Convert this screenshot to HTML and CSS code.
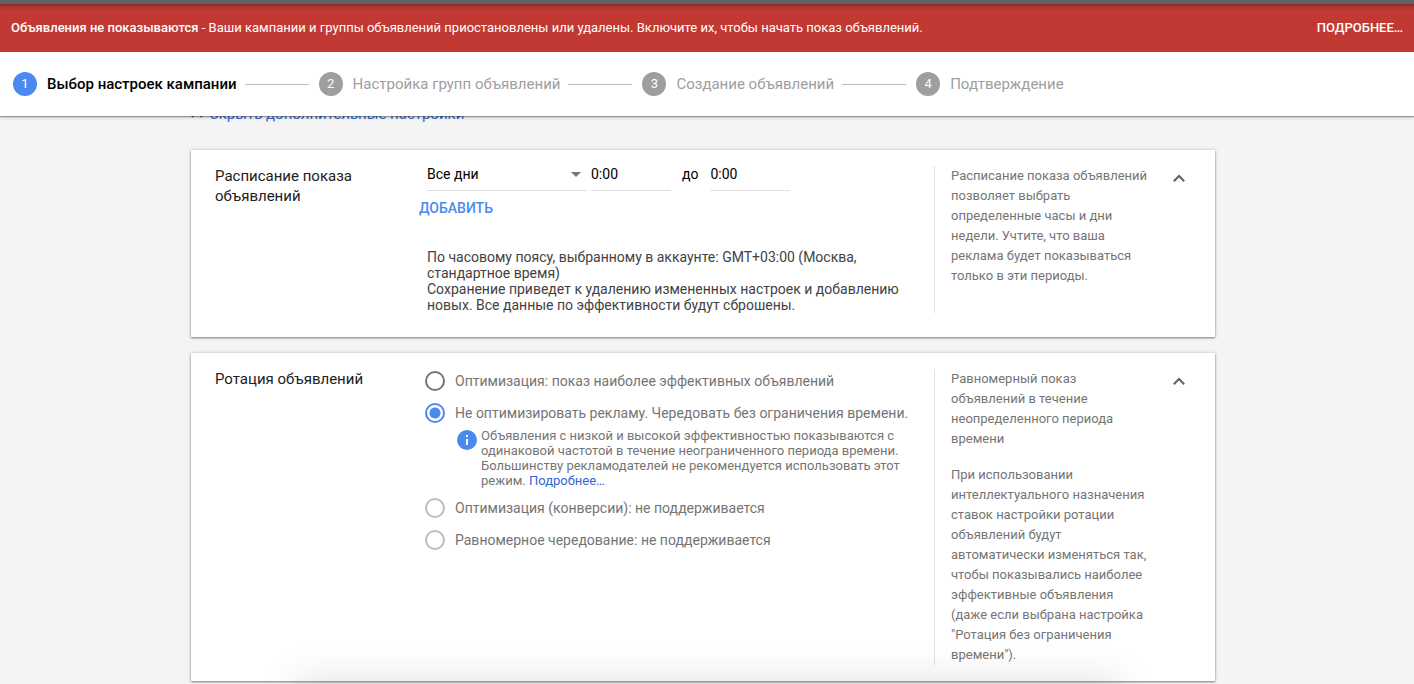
FILE: index.html
```html
<!DOCTYPE html>
<html lang="ru">
<head>
<meta charset="utf-8">
<meta name="viewport" content="width=device-width, initial-scale=1">
<title>Выбор настроек кампании</title>
<link rel="stylesheet" href="styles.css">
</head>
<body>
<header class="top">
  <div class="alert" role="alert">
    <p class="alert-text"><strong>Объявления не показываются</strong> - Ваши кампании и группы объявлений приостановлены или удалены. Включите их, чтобы начать показ объявлений.</p>
    <button type="button" class="alert-more">ПОДРОБНЕЕ…</button>
  </div>
  <ol class="steps">
    <li class="step step-current" aria-current="step"><span class="step-num">1</span><span>Выбор настроек кампании</span></li>
    <li class="step"><span class="step-num">2</span><span>Настройка групп объявлений</span></li>
    <li class="step"><span class="step-num">3</span><span>Создание объявлений</span></li>
    <li class="step"><span class="step-num">4</span><span>Подтверждение</span></li>
  </ol>
</header>

<main class="content">
  <a href="#settings" class="toggle">
    <svg class="toggle-icon" width="12" height="12" viewBox="0 0 12 12" aria-hidden="true"><path d="M1 9l5-5 5 5" fill="none" stroke="#616161" stroke-width="2"/></svg>
    <span>Скрыть дополнительные настройки</span>
  </a>

  <section class="card card-schedule" id="settings">
    <h2 class="card-title">Расписание показа объявлений</h2>
    <div class="card-body">
      <div class="times">
        <span class="select-box">
          <select class="field" aria-label="Дни"><option>Все дни</option></select>
          <svg class="caret" width="10" height="5" viewBox="0 0 10 5" aria-hidden="true"><path d="M0 0h10L5 5z" fill="#757575"/></svg>
        </span>
        <input class="field time" type="text" value="0:00" aria-label="Начало">
        <label class="until" for="end">до</label>
        <input class="field time" type="text" value="0:00" id="end">
      </div>
      <button type="button" class="add">ДОБАВИТЬ</button>
      <p class="note">По часовому поясу, выбранному в аккаунте: GMT+03:00 (Москва, стандартное время)<br>Сохранение приведет к удалению измененных настроек и добавлению новых. Все данные по эффективности будут сброшены.</p>
    </div>
    <aside class="help">
      <p>Расписание показа объявлений позволяет выбрать определенные часы и дни недели. Учтите, что ваша реклама будет показываться только в эти периоды.</p>
    </aside>
    <button type="button" class="collapse" aria-label="Свернуть"><svg width="12" height="8" viewBox="0 0 12 8" aria-hidden="true"><path d="M.8 7.2L6 2l5.200 5.200" fill="none" stroke="#616161" stroke-width="2"/></svg></button>
  </section>

  <section class="card">
    <h2 class="card-title">Ротация объявлений</h2>
    <div class="card-body options">
      <label class="option"><input type="radio" name="rotation">Оптимизация: показ наиболее эффективных объявлений</label>
      <label class="option"><input type="radio" name="rotation" checked>Не оптимизировать рекламу. Чередовать без ограничения времени.</label>
      <div class="info">
        <svg class="info-icon" width="20" height="20" viewBox="0 0 20 20" aria-hidden="true"><circle cx="10" cy="10" r="10" fill="#4a8af0"/><path d="M9 5h2v2H9zM9 9h2v6H9z" fill="#fff"/></svg>
        <p>Объявления с низкой и высокой эффективностью показываются с одинаковой частотой в течение неограниченного периода времени. Большинству рекламодателей не рекомендуется использовать этот режим. <a href="#more">Подробнее…</a></p>
      </div>
      <label class="option"><input type="radio" name="rotation" disabled>Оптимизация (конверсии): не поддерживается</label>
      <label class="option"><input type="radio" name="rotation" disabled>Равномерное чередование: не поддерживается</label>
    </div>
    <aside class="help">
      <p>Равномерный показ объявлений в течение неопределенного периода времени</p>
      <p>При использовании интеллектуального назначения ставок настройки ротации объявлений будут автоматически изменяться так, чтобы показывались наиболее эффективные объявления (даже если выбрана настройка "Ротация без ограничения времени").</p>
    </aside>
    <button type="button" class="collapse" aria-label="Свернуть"><svg width="12" height="8" viewBox="0 0 12 8" aria-hidden="true"><path d="M.8 7.2L6 2l5.200 5.200" fill="none" stroke="#616161" stroke-width="2"/></svg></button>
  </section>
</main>
<div class="bottom-shade"></div>
</body>
</html>
```

FILE: styles.css
```css
* {
  box-sizing: border-box;
}

body {
  margin: 0;
  background: #f4f4f4;
  color: #212121;
  font: 14px/16px Roboto, sans-serif;
}

h2, p, ol {
  margin: 0;
  padding: 0;
}

button, input, select {
  margin: 0;
  padding: 0;
  border: 0;
  background: none;
  color: inherit;
  font: inherit;
}

button {
  cursor: pointer;
}

a {
  color: #3367d6;
  text-decoration: none;
}

.top {
  position: sticky;
  top: 0;
  z-index: 2;
  border-top: 4px solid #616161;
  background: #fff;
  box-shadow: 0 1px 1px rgba(0, 0, 0, .3), 0 2px 3px rgba(0, 0, 0, .15);
}

.alert {
  display: flex;
  align-items: center;
  justify-content: space-between;
  gap: 24px;
  min-height: 48px;
  padding: 0 11px;
  background: linear-gradient(rgba(0, 0, 0, .3), rgba(0, 0, 0, .08) 3px, transparent 8px) #c23934;
  color: #fff;
}

.alert-text {
  font-size: 13px;
}

.alert-text strong {
  font-weight: 500;
}

.alert-more {
  font-size: 13px;
  font-weight: 500;
}

.steps {
  display: flex;
  align-items: center;
  min-height: 64px;
  padding: 0 13px;
  list-style: none;
}

.step {
  display: flex;
  align-items: center;
  gap: 10px;
  color: #9e9e9e;
  font-size: 15px;
}

.step:not(:last-child)::after {
  content: "";
  width: 64px;
  height: 1px;
  margin-left: -2px;
  margin-right: 10px;
  background: #bdbdbd;
}

.step-num {
  display: grid;
  place-items: center;
  width: 24px;
  height: 24px;
  border-radius: 50%;
  background: #9e9e9e;
  color: #fff;
  font-size: 13px;
  font-weight: 400;
}

.step-current {
  color: #000;
  font-weight: 500;
}

.step-current .step-num {
  background: #4a8af0;
}

.content {
  display: flex;
  flex-direction: column;
  gap: 16px;
  max-width: 1032px;
  margin: -10px auto 0;
  padding-right: 8px;
  padding-bottom: 3px;
}

.toggle {
  display: flex;
  align-items: center;
  align-self: flex-start;
  gap: 6px;
  height: 16px;
  margin-bottom: 12px;
  font-size: 15px;
}

.card {
  display: grid;
  grid-template-columns: 212px minmax(0, 1fr) 220px 50px;
  padding: 16px 11px 16px 24px;
  background: #fff;
  box-shadow: 0 1px 2px rgba(0, 0, 0, .45), 0 0 4px rgba(0, 0, 0, .15);
}

.card-schedule {
  padding-bottom: 24px;
}

.card-title {
  padding-right: 48px;
  font-size: 15px;
  font-weight: 400;
  line-height: 20px;
}

.times {
  display: flex;
  align-items: flex-start;
  color: #000;
}

.field {
  height: 25px;
  padding-bottom: 8px;
  border-bottom: 1px solid #e0e0e0;
  border-radius: 0;
}

.select-box {
  display: flex;
  align-items: center;
  width: 160px;
  margin-right: 4px;
}

.select-box .field {
  flex: 1;
  appearance: none;
}

.caret {
  margin: 0 6px 8px -16px;
  pointer-events: none;
}

.time {
  width: 80px;
}

.until {
  padding: 0 12px 0 11px;
}

.add {
  display: block;
  height: 34px;
  margin: 0 0 24px -8px;
  color: #4a8af0;
  font-weight: 500;
}

.note {
  padding-right: 24px;
  color: #424242;
}

.help {
  padding-right: 2px;
  padding-left: 16px;
  border-left: 1px solid #e0e0e0;
  color: #757575;
  font-size: 13px;
  line-height: 20px;
}

.help p + p {
  margin-top: 16px;
}

.collapse {
  display: grid;
  place-items: center;
  align-self: start;
  justify-self: center;
  width: 24px;
  height: 24px;
}

.option {
  display: flex;
  align-items: center;
  gap: 10px;
  height: 20px;
  margin: 2px 0 12px -2px;
  color: #757575;
}

.option input {
  flex: none;
  appearance: none;
  width: 20px;
  height: 20px;
  border: 2px solid #757575;
  border-radius: 50%;
}

.option input:checked {
  border-color: #4a8af0;
  background: radial-gradient(circle, #4a8af0 5px, transparent 6px);
}

.option input:disabled {
  border-color: #bdbdbd;
}

.info {
  display: flex;
  gap: 4px;
  margin: -7px 0 10px 30px;
  color: #757575;
  font-size: 13px;
  line-height: 15px;
}

.info-icon {
  flex: none;
  margin-top: 2px;
}

.info p {
  padding-right: 24px;
}

.bottom-shade {
  position: fixed;
  right: 22%;
  bottom: -28px;
  left: 22%;
  height: 16px;
  box-shadow: 0 0 40px 16px rgba(0, 0, 0, .12);
  pointer-events: none;
}
```
